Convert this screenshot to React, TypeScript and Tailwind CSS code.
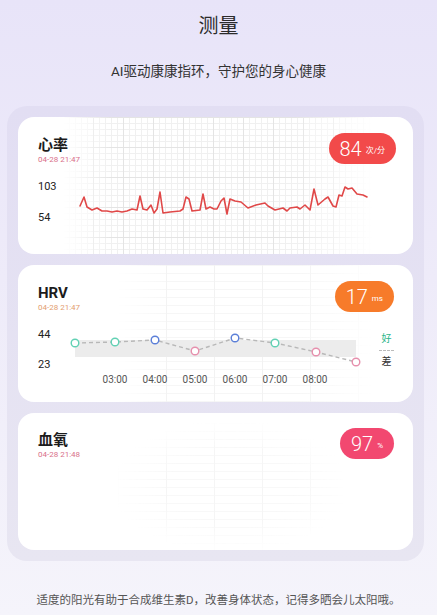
import React from 'react';

const FONT = { fontFamily: 'Roboto, "Noto Sans CJK SC", "Noto Sans", sans-serif' };

// heart rate trace, chart-local coords (svg origin at page x 70, y 180)
const hrPoints: [number, number][] = [
  [80, 207], [84, 198], [87, 208], [92, 211], [97, 209], [102, 212], [107, 212], [112, 213],
  [117, 212], [122, 213], [127, 212], [132, 210], [137, 211], [140, 197], [143, 210], [147, 211],
  [151, 206], [154, 214], [157, 210], [160, 193], [163, 214], [170, 213], [180, 212], [183, 210],
  [186, 198], [189, 200], [192, 212], [200, 211], [203, 195], [206, 210], [210, 208], [214, 210],
  [217, 210], [221, 202], [224, 199], [227, 215], [230, 200], [235, 202], [241, 203], [248, 209],
  [256, 206], [265, 204], [268, 207], [275, 211], [283, 209], [287, 212], [290, 209], [297, 208],
  [300, 210], [305, 206], [310, 211], [314, 190], [318, 206], [325, 200], [328, 198], [333, 207],
  [336, 208], [339, 196], [342, 197], [345, 188], [348, 190], [352, 189], [357, 195], [363, 196],
  [367, 198],
];

// hrv points, svg origin at page x 60, y 328
const hrvPoints: { x: number; y: number; c: string }[] = [
  { x: 15, y: 14, c: '#62d1b4' },
  { x: 55, y: 13, c: '#62d1b4' },
  { x: 95, y: 11, c: '#5b7fd8' },
  { x: 135, y: 22, c: '#e690ad' },
  { x: 175, y: 9, c: '#5b7fd8' },
  { x: 215, y: 14, c: '#62d1b4' },
  { x: 256, y: 23, c: '#e690ad' },
  { x: 296, y: 33, c: '#e690ad' },
];

const hours = ['03:00', '04:00', '05:00', '06:00', '07:00', '08:00'];

const Badge: React.FC<{ value: string; unit: string; color: string }> = ({ value, unit, color }) => (
  <div className={`h-[31px] rounded-full flex items-center justify-center gap-[4px] px-[11px] text-white ${color}`}>
    <span className="text-[20px] font-light leading-none">{value}</span>
    <span className="text-[8px] leading-none mt-[5px]">{unit}</span>
  </div>
);

const CardHeader: React.FC<{ title: string; date: string; dateColor: string; badge: React.ReactNode }> = ({
  title,
  date,
  dateColor,
  badge,
}) => (
  <div className="flex justify-between items-start">
    <div className="pt-[3px]">
      <div className="text-[15px] font-bold leading-[18px] text-[#1c1c1c]">{title}</div>
      <div className={`text-[8px] leading-[10px] mt-[1px] ${dateColor}`}>{date}</div>
    </div>
    {badge}
  </div>
);

export default function App() {
  return (
    <div
      style={FONT}
      className="w-[437px] h-[615px] overflow-hidden bg-[linear-gradient(to_bottom,#e8e4f9,#eeebf9_45%,#f5f4fb)]"
    >
      <div className="h-[48px] flex items-center justify-center text-[20px] text-[#2b2b2b] pt-[3px]">测量</div>
      <div className="h-[46px] flex items-center justify-center text-[13.5px] text-[#333]">
        AI驱动康康指环，守护您的身心健康
      </div>

      <div className="ml-[7px] mt-[12px] w-[417px] rounded-[20px] bg-[linear-gradient(to_bottom,#e2def3,#e8e6f2)] p-[11px] flex flex-col gap-[11px]">
        {/* heart rate */}
        <div className="relative h-[137px] rounded-[16px] bg-white overflow-hidden">
          <div className="absolute left-[45px] right-[40px] top-0 bottom-0 opacity-90 bg-[linear-gradient(to_right,#e2e2e2_1px,transparent_1px),linear-gradient(to_bottom,#e2e2e2_1px,transparent_1px),linear-gradient(to_right,#efefef_1px,transparent_1px),linear-gradient(to_bottom,#efefef_1px,transparent_1px)] bg-[size:30px_30px,30px_30px,6px_6px,6px_6px] [mask-image:linear-gradient(to_right,transparent,black_15%,black_75%,transparent)]" />
          <div className="relative pl-[20px] pr-[17px] pt-[16px]">
            <CardHeader
              title="心率"
              date="04-28 21:47"
              dateColor="text-[#d9708a]"
              badge={<Badge value="84" unit="次/分" color="bg-[#f24a4a]" />}
            />
            <div className="flex mt-[14px]">
              <div className="w-[32px] text-[11px] leading-[14px] text-[#222]">
                <div className="mt-[1px]">103</div>
                <div className="mt-[17px]">54</div>
              </div>
              <svg width="310" height="45" viewBox="0 0 310 45">
                <polyline
                  points={hrPoints.map(([x, y]) => `${x - 70},${y - 180}`).join(' ')}
                  fill="none"
                  stroke="#e04848"
                  strokeWidth="1.6"
                  strokeLinejoin="round"
                  strokeLinecap="round"
                />
              </svg>
            </div>
          </div>
        </div>

        {/* HRV */}
        <div className="relative h-[137px] rounded-[16px] bg-white overflow-hidden">
          <div className="absolute left-[100px] right-[40px] top-0 bottom-0 opacity-50 bg-[linear-gradient(to_right,#e6e6e6_1px,transparent_1px),linear-gradient(to_bottom,#ededed_1px,transparent_1px)] bg-[size:48px_48px,8px_8px] [mask-image:linear-gradient(to_right,transparent,black_20%,black_70%,transparent)]" />
          <div className="relative pl-[20px] pr-[19px] pt-[16px]">
            <CardHeader
              title="HRV"
              date="04-28 21:47"
              dateColor="text-[#e3a070]"
              badge={<Badge value="17" unit="ms" color="bg-[#f77b2a]" />}
            />
            <div className="flex mt-[16px]">
              <div className="w-[22px] text-[11px] leading-[12px] text-[#222]">
                <div>44</div>
                <div className="mt-[18px]">23</div>
              </div>
              <div className="flex flex-col">
                <svg width="305" height="40" viewBox="0 0 305 40">
                  <rect x="15" y="11" width="281" height="17" fill="#ececec" />
                  <polyline
                    points={hrvPoints.map((p) => `${p.x},${p.y}`).join(' ')}
                    fill="none"
                    stroke="#b8b8b8"
                    strokeWidth="1.4"
                    strokeDasharray="4 3"
                  />
                  {hrvPoints.map((p, i) => (
                    <circle key={i} cx={p.x} cy={p.y} r="3.8" fill="white" stroke={p.c} strokeWidth="1.4" />
                  ))}
                </svg>
                <div className="flex ml-[35px] mt-[5px] text-[10px] leading-[12px] text-[#555]">
                  {hours.map((h) => (
                    <div key={h} className="w-[40px] text-center">
                      {h}
                    </div>
                  ))}
                </div>
              </div>
              <div className="ml-auto w-[15px] flex flex-col items-center text-[10px] leading-[12px] mt-[4px]">
                <div className="text-[#2bb58a]">好</div>
                <div className="w-[15px] border-t border-dashed border-[#bbbbbb] mt-[5px]" />
                <div className="text-[#333] mt-[5px]">差</div>
              </div>
            </div>
          </div>
        </div>

        {/* blood oxygen */}
        <div className="relative h-[137px] rounded-[16px] bg-white overflow-hidden">
          <div className="absolute left-[100px] right-[70px] top-[10px] bottom-0 opacity-40 bg-[linear-gradient(to_right,#e6e6e6_1px,transparent_1px),linear-gradient(to_bottom,#ededed_1px,transparent_1px)] bg-[size:48px_48px,8px_8px] [mask-image:radial-gradient(ellipse_at_center,black_40%,transparent_75%)]" />
          <div className="relative pl-[20px] pr-[19px] pt-[15px]">
            <CardHeader
              title="血氧"
              date="04-28 21:48"
              dateColor="text-[#d9708a]"
              badge={<Badge value="97" unit="%" color="bg-[#f24870]" />}
            />
          </div>
        </div>
      </div>

      <div className="mt-[31px] text-center text-[11.5px] text-[#555] leading-[16px]">
        适度的阳光有助于合成维生素D，改善身体状态，记得多晒会儿太阳哦。
      </div>
    </div>
  );
}
